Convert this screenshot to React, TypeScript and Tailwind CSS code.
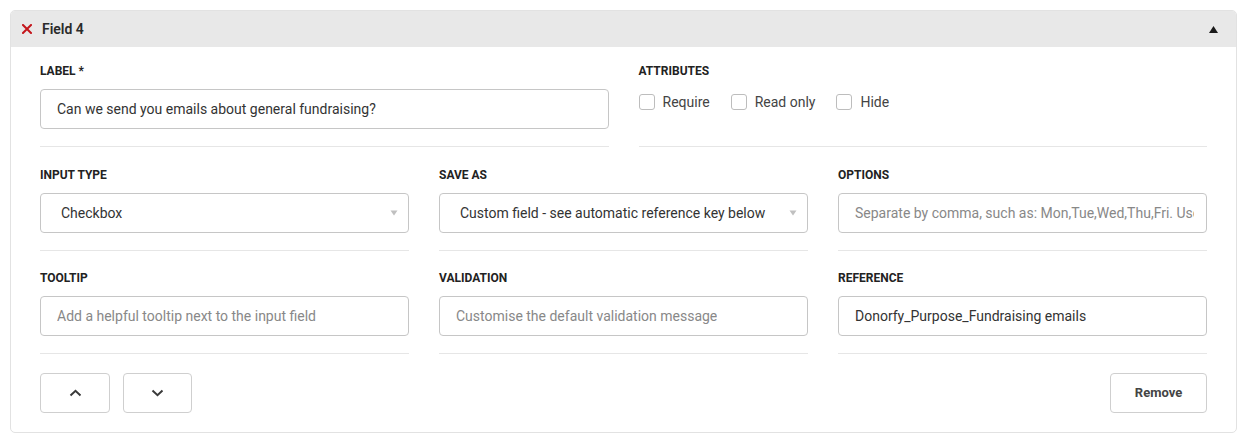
import React from "react";

const Label = ({ children }: { children: React.ReactNode }) => (
  <div className="h-4 text-[12px] leading-[18px] font-bold text-[#222] uppercase mb-[11px]">{children}</div>
);

const Hr = () => <div className="h-px bg-[#e6e6e6] mt-[17px]" />;

const TextInput = ({ value, placeholder }: { value?: string; placeholder?: string }) => (
  <div className="h-10 border border-[#c6c6c6] rounded-[4px] flex items-center pl-4 pr-[12px] text-[14px]">
    <span className={"overflow-hidden whitespace-nowrap " + (value ? "text-[#333]" : "text-[#888]")}>{value || placeholder}</span>
  </div>
);

const Select = ({ value }: { value: string }) => (
  <div className="h-10 border border-[#c6c6c6] rounded-[4px] flex items-center pl-5 pr-[10px] text-[14px] text-[#333]">
    <span className="flex-1 whitespace-nowrap overflow-hidden">{value}</span>
    <svg width="8" height="6" viewBox="0 0 8 6"><path d="M0.5 0.5 L7.5 0.5 L4 5.5 Z" fill="#c0c0c0" /></svg>
  </div>
);

const Field = ({ label, children }: { label: React.ReactNode; children: React.ReactNode }) => (
  <div className="flex flex-col">
    <Label>{label}</Label>
    {children}
    <Hr />
  </div>
);

const Check = ({ label }: { label: string }) => (
  <div className="flex items-center gap-2">
    <div className="w-4 h-4 border border-[#bdbdbd] rounded-[3px] bg-white" />
    <span className="text-[14px] text-[#444]">{label}</span>
  </div>
);

export default function App() {
  return (
    <div className="pt-[10px] pl-[10px] pr-[6px] pb-[10px] bg-white" style={{ fontFamily: "Roboto, 'Liberation Sans', sans-serif" }}>
      <div className="border border-[#e2e2e2] rounded-[5px] overflow-hidden">
        <div className="h-[36px] bg-[#e8e8e8] flex items-center pl-[11px] pr-[18px]">
          <svg width="10" height="10" viewBox="0 0 10 10" className="mr-[10px]">
            <path d="M1 1 L9 9 M9 1 L1 9" stroke="#c4161c" strokeWidth="2" strokeLinecap="square" />
          </svg>
          <span className="text-[14px] font-semibold text-[#2a2a2a] flex-1">Field 4</span>
          <svg width="9" height="7" viewBox="0 0 9 7"><path d="M0 7 L4.5 0 L9 7 Z" fill="#1a1a1a" /></svg>
        </div>
        <div className="px-[29px] pt-[15px] pb-[19px]">
          <div className="grid grid-cols-2 gap-x-[30px]">
            <Field label="Label *">
              <TextInput value="Can we send you emails about general fundraising?" />
            </Field>
            <Field label="Attributes">
              <div className="h-10 flex items-center gap-[21px] pb-[14px]">
                <Check label="Require" />
                <Check label="Read only" />
                <Check label="Hide" />
              </div>
            </Field>
          </div>
          <div className="grid grid-cols-3 gap-x-[30px] mt-[19px]">
            <Field label="Input type">
              <Select value="Checkbox" />
            </Field>
            <Field label="Save as">
              <Select value="Custom field - see automatic reference key below" />
            </Field>
            <Field label="Options">
              <TextInput placeholder="Separate by comma, such as: Mon,Tue,Wed,Thu,Fri. Use" />
            </Field>
          </div>
          <div className="grid grid-cols-3 gap-x-[30px] mt-[18px]">
            <Field label="Tooltip">
              <TextInput placeholder="Add a helpful tooltip next to the input field" />
            </Field>
            <Field label="Validation">
              <TextInput placeholder="Customise the default validation message" />
            </Field>
            <Field label="Reference">
              <TextInput value="Donorfy_Purpose_Fundraising emails" />
            </Field>
          </div>
          <div className="flex items-center mt-[19px]">
            <button className="w-[70px] h-10 border border-[#cfcfcf] rounded-[4px] flex items-center justify-center bg-white">
              <svg width="13" height="8" viewBox="0 0 13 8"><path d="M1.5 6.5 L6.5 1.8 L11.5 6.5" fill="none" stroke="#3a3a3a" strokeWidth="2" /></svg>
            </button>
            <button className="w-[69px] h-10 border border-[#cfcfcf] rounded-[4px] flex items-center justify-center bg-white ml-[13px]">
              <svg width="13" height="8" viewBox="0 0 13 8"><path d="M1.5 1.5 L6.5 6.2 L11.5 1.5" fill="none" stroke="#3a3a3a" strokeWidth="2" /></svg>
            </button>
            <div className="flex-1" />
            <button className="w-[97px] h-10 border border-[#cfcfcf] rounded-[4px] bg-white text-[13px] font-bold text-[#444]">
              Remove
            </button>
          </div>
        </div>
      </div>
    </div>
  );
}
